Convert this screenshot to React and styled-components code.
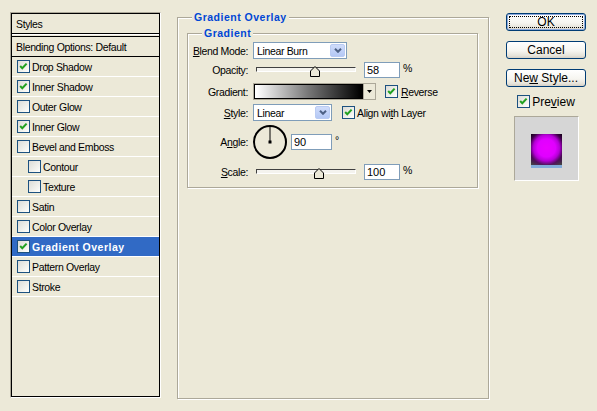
import React from 'react';
import styled, { createGlobalStyle } from 'styled-components';

const GlobalStyle = createGlobalStyle`
  html, body {
    margin: 0;
    background: #ECE9D8;
  }
  body {
    font-family: "Liberation Sans", Arial, sans-serif;
    font-size: 10.5px;
    letter-spacing: -0.35px;
    color: #000;
  }
`;

const Dialog = styled.div`
  display: flex;
  align-items: flex-start;
  width: 597px;
  height: 411px;
  box-sizing: border-box;
  padding: 12px 0 0 10px;
`;

/* ---------- left list ---------- */

const StylesPanel = styled.div`
  width: 151px;
  height: 386px;
  box-sizing: border-box;
  border: 1px solid;
  border-color: #ACA899 #fff #fff #ACA899;
`;

const StylesInner = styled.div`
  height: 100%;
  box-sizing: border-box;
  border: 1px solid #000;
  display: flex;
  flex-direction: column;
`;

const Header = styled.div`
  height: 19px;
  display: flex;
  align-items: center;
  padding-left: 4px;
  border-bottom: 1px solid #000;
`;

const Divider = styled.div`
  height: 0;
  padding-top: 1px;
  border-top: 1px solid #fff;
  border-bottom: 1px solid #000;
`;

const BlendRow = styled.div`
  height: 19px;
  display: flex;
  align-items: center;
  padding-left: 4px;
  border-bottom: 1px solid #000;
  white-space: nowrap;
`;

const Row = styled.div`
  height: 19px;
  display: flex;
  align-items: center;
  gap: 2px;
  padding-left: ${p => 5 + (p.$indent ? 11 : 0)}px;
  border-bottom: 1px solid #fff;
  background: ${p => (p.$selected ? '#316AC5' : 'transparent')};
  color: ${p => (p.$selected ? '#fff' : '#000')};
  font-weight: ${p => (p.$selected ? 'bold' : 'normal')};
  letter-spacing: ${p => (p.$selected ? '0.5px' : '-0.35px')};
  white-space: nowrap;
`;

const Box = styled.span`
  display: inline-flex;
  align-items: center;
  justify-content: center;
  flex-shrink: 0;
  width: 13px;
  height: 13px;
  box-sizing: border-box;
  border: 1px solid #1C5180;
  background: linear-gradient(135deg, #DCDCD7 0%, #F4F4F0 70%, #fff 100%);
`;

const Check = ({ on }) => (
  <Box>
    {on && (
      <svg width="11" height="11" viewBox="0 0 11 11">
        <polyline points="2.2,5 4.3,7.3 8.6,2.6" fill="none" stroke="#21A121" strokeWidth="2" />
      </svg>
    )}
  </Box>
);

/* ---------- group boxes ---------- */

const Group = styled.div`
  position: relative;
  flex-shrink: 0;
  width: ${p => p.$w}px;
  height: ${p => p.$h}px;
  box-sizing: border-box;
  margin: ${p => p.$m || 0};
  padding: ${p => p.$pad || 0};
  border: 1px solid #ACA899;
  box-shadow: inset 1px 1px 0 #fff, 1px 1px 0 #fff;
`;

const GroupTitle = styled.span`
  position: absolute;
  top: -7px;
  left: 14px;
  padding: 0 2px;
  line-height: 13px;
  background: #ECE9D8;
  color: #0046D5;
  font-weight: bold;
  letter-spacing: 0.5px;
  white-space: nowrap;
`;

const Form = styled.div`
  padding: 8px 0 0 3px;
`;

const FormRow = styled.div`
  display: flex;
  align-items: center;
  height: ${p => p.$h || 17}px;
  margin-top: ${p => p.$mt || 0}px;
  white-space: nowrap;
`;

const Label = styled.span`
  width: 57px;
  flex-shrink: 0;
  margin-right: 5px;
  text-align: right;
`;

const Combo = styled.div`
  display: flex;
  align-items: center;
  width: ${p => p.$w}px;
  height: 17px;
  box-sizing: border-box;
  border: 1px solid #7F9DB9;
  background: #fff;
  padding-left: 3px;
`;

const ComboText = styled.span`
  flex: 1;
`;

const ComboButton = styled.span`
  display: flex;
  align-items: center;
  justify-content: center;
  width: 15px;
  height: 13px;
  margin-right: 1px;
  box-sizing: border-box;
  border: 1px solid #B9CBF3;
  border-radius: 2px;
  background: linear-gradient(#CFDCFA, #B4C8F5);
`;

const Select = ({ w, children }) => (
  <Combo $w={w}>
    <ComboText>{children}</ComboText>
    <ComboButton>
      <svg width="8" height="5" viewBox="0 0 8 5">
        <polyline points="1,0.8 4,3.8 7,0.8" fill="none" stroke="#4D6185" strokeWidth="2" />
      </svg>
    </ComboButton>
  </Combo>
);

const Track = styled.div`
  position: relative;
  width: 100px;
  height: 5px;
  margin-left: 3px;
  box-sizing: border-box;
  border: 1px solid;
  border-color: #404040 #fff #fff #404040;
  background: #F4F3EE;
`;

const Thumb = styled.svg`
  position: absolute;
  top: -2px;
`;

const Slider = ({ pct }) => (
  <Track>
    <Thumb width="10" height="11" viewBox="0 0 10 11" style={{ left: pct - 5 }}>
      <path d="M5 0.5 L9.5 5 L9.5 10.5 L0.5 10.5 L0.5 5 Z" fill="#ECE9D8" stroke="#000" strokeWidth="1" />
    </Thumb>
  </Track>
);

const NumField = styled.div`
  width: ${p => p.$w}px;
  height: 16px;
  margin-left: ${p => p.$ml}px;
  box-sizing: border-box;
  border: 1px solid #7F9DB9;
  background: #fff;
  padding-left: 2px;
  display: flex;
  align-items: center;
  font-size: 11px;
  letter-spacing: 0;
`;

const Unit = styled.span`
  align-self: flex-start;
  margin-left: 3px;
  margin-top: ${p => p.$mt || 1}px;
`;

const GradientSwatch = styled.div`
  width: 111px;
  height: 17px;
  box-sizing: border-box;
  border: 1px solid #ACA899;
  box-shadow: inset 0 0 0 1px #000;
  background: linear-gradient(to right, #fff 2%, #777 50%, #000 98%);
`;

const GradientArrow = styled.div`
  display: flex;
  align-items: center;
  justify-content: center;
  width: 12px;
  height: 17px;
  box-sizing: border-box;
  border: 1px solid #ACA899;
  border-left: none;
  background: #ECE9D8;
`;

const CheckLabel = styled.span`
  display: flex;
  align-items: center;
  gap: ${p => p.$gap || 3}px;
  margin-left: ${p => p.$ml}px;
`;

/* ---------- right column ---------- */

const RightCol = styled.div`
  display: flex;
  flex-direction: column;
  align-items: center;
  width: 80px;
  margin: 1px 0 0 17px;
  font-size: 12px;
  letter-spacing: 0;
`;

const Button = styled.div`
  position: relative;
  display: flex;
  align-items: center;
  justify-content: center;
  width: 80px;
  height: 18px;
  margin-top: ${p => p.$mt || 0}px;
  box-sizing: border-box;
  border: 1px solid #003C74;
  border-radius: 3px;
  background: linear-gradient(#FFFFFF 0%, #F6F5F0 55%, #E6E3DA 85%, #D6D0C5 100%);
  box-shadow: ${p => (p.$default ? 'inset 0 0 0 1px #8DA9DC' : 'none')};
  white-space: nowrap;

  &::after {
    content: '';
    display: ${p => (p.$default ? 'block' : 'none')};
    position: absolute;
    inset: 2px;
    border: 1px dotted #000;
  }
`;

const PreviewRow = styled.div`
  display: flex;
  align-items: center;
  gap: 2px;
  height: 13px;
  margin-top: 8px;
`;

const PreviewBox = styled.div`
  display: flex;
  flex-direction: column;
  align-items: center;
  width: 65px;
  height: 65px;
  margin-top: 8px;
  box-sizing: border-box;
  padding-top: 17px;
  border: 1px solid;
  border-color: #ACA899 #fff #fff #ACA899;
  background: #D6D6D6;
`;

const PreviewSwatch = styled.div`
  width: 31px;
  height: 31px;
  background:
    radial-gradient(circle at 50% 45%, #EA00FF 0, #E000FF 9px, #B400D6 13px, rgba(90, 0, 105, 0.7) 17px, rgba(0, 0, 0, 0) 22px),
    linear-gradient(#000, #12001a 55%, #474747 100%);
`;

const PreviewBar = styled.div`
  width: 31px;
  height: 3px;
  background: #84ACDA;
`;

const styleList = [
  { name: 'Drop Shadow', on: true },
  { name: 'Inner Shadow', on: true },
  { name: 'Outer Glow', on: false },
  { name: 'Inner Glow', on: true },
  { name: 'Bevel and Emboss', on: false },
  { name: 'Contour', on: false, indent: true },
  { name: 'Texture', on: false, indent: true },
  { name: 'Satin', on: false },
  { name: 'Color Overlay', on: false },
  { name: 'Gradient Overlay', on: true, selected: true },
  { name: 'Pattern Overlay', on: false },
  { name: 'Stroke', on: false },
];

export default function App() {
  return (
    <>
      <GlobalStyle />
      <Dialog>
        <StylesPanel>
          <StylesInner>
            <Header>Styles</Header>
            <Divider />
            <BlendRow>Blending Options: Default</BlendRow>
            {styleList.map(s => (
              <Row key={s.name} $indent={s.indent} $selected={s.selected}>
                <Check on={s.on} />
                <span>{s.name}</span>
              </Row>
            ))}
          </StylesInner>
        </StylesPanel>

        <Group $w={312} $h={382} $m="5px 0 0 16px" $pad="15px 9px 0 9px">
          <GroupTitle>Gradient Overlay</GroupTitle>
          <Group $w={291} $h={155}>
            <GroupTitle>Gradient</GroupTitle>
            <Form>
              <FormRow>
                <Label><u>B</u>lend Mode:</Label>
                <Select w={94}>Linear Burn</Select>
              </FormRow>
              <FormRow $mt={2}>
                <Label>Opacity:</Label>
                <Slider pct={58} />
                <NumField $w={36} $ml={8}>58</NumField>
                <Unit>%</Unit>
              </FormRow>
              <FormRow $mt={5}>
                <Label>Gradient:</Label>
                <GradientSwatch />
                <GradientArrow>
                  <svg width="5" height="3" viewBox="0 0 5 3">
                    <polygon points="0,0 5,0 2.5,3" fill="#000" />
                  </svg>
                </GradientArrow>
                <CheckLabel $ml={9}>
                  <Check on />
                  <span><u>R</u>everse</span>
                </CheckLabel>
              </FormRow>
              <FormRow $mt={4}>
                <Label><u>S</u>tyle:</Label>
                <Select w={79}>Linear</Select>
                <CheckLabel $ml={10} $gap={2}>
                  <Check on />
                  <span>Align wi<u>t</u>h Layer</span>
                </CheckLabel>
              </FormRow>
              <FormRow $mt={3} $h={36}>
                <Label>A<u>n</u>gle:</Label>
                <svg width="36" height="36" viewBox="0 0 36 36" style={{ marginLeft: -1, flexShrink: 0 }}>
                  <circle cx="18" cy="18" r="16" fill="none" stroke="#000" strokeWidth="2" />
                  <line x1="18" y1="18" x2="18" y2="2" stroke="#000" strokeWidth="1" />
                  <rect x="16.5" y="16.5" width="3" height="3" fill="#000" />
                </svg>
                <NumField $w={41} $ml={3}>90</NumField>
                <Unit $mt={10}>°</Unit>
              </FormRow>
              <FormRow $mt={3}>
                <Label><u>S</u>cale:</Label>
                <Slider pct={62} />
                <NumField $w={36} $ml={8}>100</NumField>
                <Unit>%</Unit>
              </FormRow>
            </Form>
          </Group>
        </Group>

        <RightCol>
          <Button $default><span>OK</span></Button>
          <Button $mt={10}><span>Cancel</span></Button>
          <Button $mt={10}><span>Ne<u>w</u> Style...</span></Button>
          <PreviewRow>
            <Check on />
            <span>Pre<u>v</u>iew</span>
          </PreviewRow>
          <PreviewBox>
            <PreviewSwatch />
            <PreviewBar />
          </PreviewBox>
        </RightCol>
      </Dialog>
    </>
  );
}
